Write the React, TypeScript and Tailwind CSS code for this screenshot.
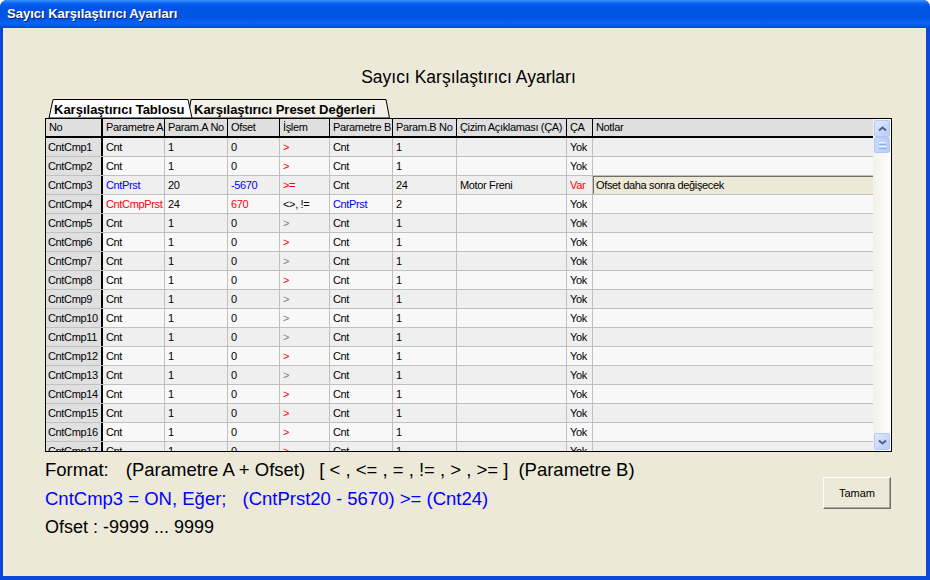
import React from "react";

type Cell = { t: string; c?: string };
type Row = {
  no: string;
  a: Cell;
  an: string;
  of: Cell;
  op: Cell;
  b: Cell;
  bn: string;
  desc: string;
  ca: Cell;
  note: string;
};

const RED = "text-[#ff0000]";
const BLUE = "text-[#0000ff]";
const GRAY = "text-[#808080]";
const grayOps = [5, 7, 9, 10, 11, 13];

function plain(i: number): Row {
  return {
    no: `CntCmp${i}`,
    a: { t: "Cnt" },
    an: "1",
    of: { t: "0" },
    op: { t: ">", c: grayOps.includes(i) ? GRAY : RED },
    b: { t: "Cnt" },
    bn: "1",
    desc: "",
    ca: { t: "Yok" },
    note: "",
  };
}

const rows: Row[] = [
  plain(1),
  plain(2),
  {
    no: "CntCmp3",
    a: { t: "CntPrst", c: BLUE },
    an: "20",
    of: { t: "-5670", c: BLUE },
    op: { t: ">=", c: RED },
    b: { t: "Cnt" },
    bn: "24",
    desc: "Motor Freni",
    ca: { t: "Var", c: RED },
    note: "Ofset daha sonra değişecek",
  },
  {
    no: "CntCmp4",
    a: { t: "CntCmpPrst", c: RED },
    an: "24",
    of: { t: "670", c: RED },
    op: { t: "<>, !=" },
    b: { t: "CntPrst", c: BLUE },
    bn: "2",
    desc: "",
    ca: { t: "Yok" },
    note: "",
  },
  ...Array.from({ length: 13 }, (_, k) => plain(k + 5)),
];

const headers = [
  { label: "No", w: "w-[57px] border-r-2" },
  { label: "Parametre A", w: "w-[62px] border-r" },
  { label: "Param.A No", w: "w-[63px] border-r" },
  { label: "Ofset", w: "w-[52px] border-r" },
  { label: "İşlem", w: "w-[50px] border-r" },
  { label: "Parametre B", w: "w-[63px] border-r" },
  { label: "Param.B No", w: "w-[64px] border-r" },
  { label: "Çizim Açıklaması (ÇA)", w: "w-[110px] border-r" },
  { label: "ÇA", w: "w-[26px] border-r" },
  { label: "Notlar", w: "flex-1" },
];

function C({ w, cell }: { w: string; cell: Cell | string }) {
  const c = typeof cell === "string" ? { t: cell } : cell;
  return (
    <div
      className={`${w} h-full shrink-0 overflow-hidden whitespace-nowrap border-[#c0c0c0] pl-[3px] leading-[18px] ${c.c ?? "text-black"}`}
    >
      {c.t}
    </div>
  );
}

function ScrollBtn({ down }: { down?: boolean }) {
  return (
    <div className="mx-[1px] flex h-[17px] w-[16px] items-center justify-center rounded-[2px] border border-[#b4c8f6] bg-gradient-to-br from-[#e1eafe] to-[#b6cbf8]">
      <svg width="9" height="6" viewBox="0 0 9 6">
        <path
          d={down ? "M1 1.5 L4.5 4.5 L8 1.5" : "M1 4.5 L4.5 1.5 L8 4.5"}
          fill="none"
          stroke="#4d6185"
          strokeWidth="2"
        />
      </svg>
    </div>
  );
}

export default function App() {
  return (
    <div
      className="flex h-[580px] w-[930px] flex-col overflow-hidden rounded-t-[7px] bg-[#0a46d8]"
      style={{ fontFamily: '"Liberation Sans", Arial, sans-serif' }}
    >
      {/* title bar */}
      <div className="flex h-[28px] shrink-0 items-center bg-[linear-gradient(to_bottom,#3d95ff_0%,#0a63f2_12%,#0055e5_25%,#0053e2_60%,#0763f3_85%,#0046d5_100%)] pl-[7px]">
        <span className="text-[13px] font-bold text-white [text-shadow:1px_1px_0_#0a1e6e]">
          Sayıcı Karşılaştırıcı Ayarları
        </span>
      </div>

      <div className="mx-[3px] mb-[4px] mr-[4px] flex-1 bg-[#ece9d8]">
        <div className="ml-[42px] w-[847px]">
          <div className="mt-[39px] text-center text-[17.5px] leading-[20px] text-black">
            Sayıcı Karşılaştırıcı Ayarları
          </div>

          {/* tabs */}
          <div className="relative mt-[12px] flex h-[19px] items-end text-[13px] font-bold leading-[17px] text-black">
            <svg className="absolute inset-0" width="847" height="19">
              <polygon points="143,19 146,0.5 341,0.5 344.5,19" fill="#f3f1e8" stroke="#000" strokeWidth="1" />
              <polygon points="4,19 8,0.5 143,0.5 147,19" fill="#ffffff" stroke="#000" strokeWidth="1" />
            </svg>
            <span className="relative ml-[9px] w-[140px] whitespace-nowrap">Karşılaştırıcı Tablosu</span>
            <span className="relative whitespace-nowrap">Karşılaştırıcı Preset Değerleri</span>
          </div>

          {/* grid */}
          <div className="flex h-[334px] border border-black text-[11px] tracking-[-0.35px]">
            <div className="flex w-[827px] flex-col overflow-hidden">
              <div className="flex h-[19px] shrink-0 border-b-2 border-black bg-[#dfdfdf]">
                {headers.map((h) => (
                  <div
                    key={h.label}
                    className={`${h.w} h-full shrink-0 overflow-hidden whitespace-nowrap border-black pl-[3px] leading-[17px]`}
                  >
                    {h.label}
                  </div>
                ))}
              </div>
              {rows.map((r, i) => (
                <div
                  key={r.no}
                  className={`flex h-[19px] shrink-0 border-b border-[#c0c0c0] ${i % 2 === 0 ? "bg-[#efefef]" : "bg-[#f8f8f8]"}`}
                >
                  <div className="h-full w-[57px] shrink-0 overflow-hidden whitespace-nowrap border-r-2 border-black bg-[#e0e0e0] pl-[2px] leading-[18px]">
                    {r.no}
                  </div>
                  <C w="w-[62px] border-r" cell={r.a} />
                  <C w="w-[63px] border-r" cell={r.an} />
                  <C w="w-[52px] border-r" cell={r.of} />
                  <C w="w-[50px] border-r" cell={r.op} />
                  <C w="w-[63px] border-r" cell={r.b} />
                  <C w="w-[64px] border-r" cell={r.bn} />
                  <C w="w-[110px] border-r" cell={r.desc} />
                  <C w="w-[26px] border-r" cell={r.ca} />
                  {r.note ? (
                    <div className="h-full flex-1 overflow-hidden whitespace-nowrap border-l border-t border-[#716f64] bg-[#ece9d8] pl-[2px] leading-[17px] text-black">
                      {r.note}
                    </div>
                  ) : (
                    <div className="h-full flex-1" />
                  )}
                </div>
              ))}
            </div>
            {/* scrollbar */}
            <div className="flex w-[18px] flex-col bg-[linear-gradient(to_right,#f3f1ec,#fefefb)] py-[1px]">
              <ScrollBtn />
              <div className="mx-[1px] flex h-[16px] w-[16px] flex-col items-center justify-center gap-[1px] rounded-[2px] border border-[#b4c8f6] bg-gradient-to-r from-[#c9d8fc] to-[#b6cbf8]">
                <div className="h-[1px] w-[7px] bg-[#eef4fe]" />
                <div className="h-[1px] w-[7px] bg-[#8ca8e8]" />
                <div className="h-[1px] w-[7px] bg-[#eef4fe]" />
                <div className="h-[1px] w-[7px] bg-[#8ca8e8]" />
              </div>
              <div className="flex-1" />
              <ScrollBtn down />
            </div>
          </div>

          {/* footer */}
          <div className="flex items-start justify-between">
            <div className="mt-[3px] whitespace-pre text-[18.5px] leading-[29px] text-black">
              <div>
                <span>Format:</span>
                <span className="ml-[17px]">(Parametre A + Ofset)</span>
                <span className="ml-[14px]">[ &lt; , &lt;= , = , != , &gt; , &gt;= ]</span>
                <span className="ml-[10px]">(Parametre B)</span>
              </div>
              <div className="text-[#0000ff]">
                <span>CntCmp3 = ON, Eğer;</span>
                <span className="ml-[16px]">(CntPrst20 - 5670) &gt;= (Cnt24)</span>
              </div>
              <div className="text-[18px]">Ofset : -9999 ... 9999</div>
            </div>
            <button
              type="button"
              className="mr-[1px] mt-[25px] h-[32px] w-[68px] border border-b-[#716f64] border-l-white border-r-[#716f64] border-t-white bg-[#ece9d8] text-[11px] text-black shadow-[inset_-1px_-1px_0_#aca899]"
            >
              Tamam
            </button>
          </div>
        </div>
      </div>
    </div>
  );
}
